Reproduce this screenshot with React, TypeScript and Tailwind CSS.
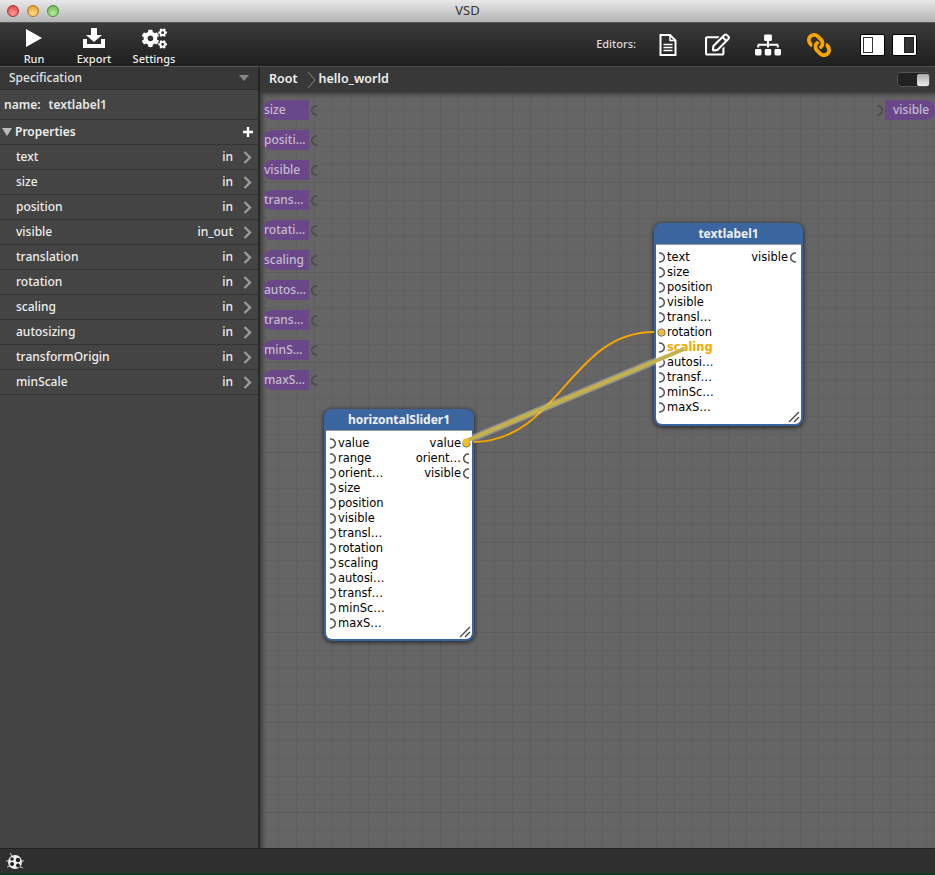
import React from "react";
import { FaCogs, FaRegEdit, FaSitemap, FaLink } from "react-icons/fa";

const FONT = "font-['Noto_Sans','DejaVu_Sans',sans-serif]";

const properties = [
  { name: "text", dir: "in" },
  { name: "size", dir: "in" },
  { name: "position", dir: "in" },
  { name: "visible", dir: "in_out" },
  { name: "translation", dir: "in" },
  { name: "rotation", dir: "in" },
  { name: "scaling", dir: "in" },
  { name: "autosizing", dir: "in" },
  { name: "transformOrigin", dir: "in" },
  { name: "minScale", dir: "in" },
];

const leftPills = ["size", "positi…", "visible", "trans…", "rotati…", "scaling", "autos…", "trans…", "minS…", "maxS…"];

// little half ring used for every connection port
const Port = ({ flip, color = "#555", filled }: { flip?: boolean; color?: string; filled?: boolean }) => (
  <svg width="7" height="11" viewBox="0 0 7 11" className={flip ? "shrink-0 -scale-x-100 overflow-visible" : "shrink-0 overflow-visible"}>
    {filled ? (
      <circle cx="3.5" cy="5.5" r="3.7" fill="#f0bd2c" stroke="#777" strokeWidth="1" />
    ) : (
      <path d="M1 1.2 A4.4 4.4 0 1 1 1 9.8" fill="none" stroke={color} strokeWidth="1.5" />
    )}
  </svg>
);

const NodeRow = ({ label, filled, highlight }: { label: string; filled?: boolean; highlight?: boolean }) => (
  <div className="flex h-[15px] items-center gap-[2px] leading-[15px]">
    <Port filled={filled} />
    <span className={highlight ? "font-bold text-[#f8a900]" : "text-black"}>{label}</span>
  </div>
);

const NodeOutRow = ({ label, filled }: { label: string; filled?: boolean }) => (
  <div className="flex h-[15px] items-center justify-end gap-[2px] leading-[15px]">
    <span className="text-black">{label}</span>
    <Port flip filled={filled} />
  </div>
);

const GraphNode = ({
  title,
  className,
  bodyPad,
  inputs,
  outputs,
  filledIn,
  highlight,
  filledOut,
}: {
  title: string;
  className: string;
  bodyPad: string;
  inputs: string[];
  outputs: string[];
  filledIn?: string;
  highlight?: string;
  filledOut?: string;
}) => (
  <div
    className={`absolute flex flex-col rounded-lg bg-[#3a659f] px-[2px] pb-[2px] shadow-[0_1px_5px_rgba(0,0,0,0.75)] ${className}`}
  >
    <div className="flex h-[21px] shrink-0 items-center justify-center text-[12px] font-bold text-[#eef2f8]">{title}</div>
    <div className={`relative flex flex-1 justify-between rounded-b-md border-t border-[#999] bg-white pt-[5px] font-['DejaVu_Sans',sans-serif] text-[11.5px] ${bodyPad}`}>
      <div className="flex flex-col">
        {inputs.map((n, i) => (
          <NodeRow key={i} label={n} filled={n === filledIn} highlight={n === highlight} />
        ))}
      </div>
      <div className="flex flex-col">
        {outputs.map((n, i) => (
          <NodeOutRow key={i} label={n} filled={n === filledOut} />
        ))}
      </div>
      <svg width="12" height="12" viewBox="0 0 12 12" className="absolute bottom-[1px] right-[1px]">
        <path d="M1 11 L11 1 M6 11 L11 6" stroke="#444" strokeWidth="1.3" />
      </svg>
    </div>
  </div>
);

const ToolButton = ({ label, icon, width }: { label: string; icon: React.ReactNode; width: string }) => (
  <div className={`flex flex-col items-center ${width}`}>
    <div className="flex h-[28px] items-center justify-center">{icon}</div>
    <span className="text-[11px] font-medium leading-[13px] text-[#eee]">{label}</span>
  </div>
);

export default function App() {
  return (
    <div className={`flex h-[875px] w-[935px] flex-col overflow-hidden bg-[#333] ${FONT}`}>
      {/* window title bar */}
      <div className="relative flex h-[23px] shrink-0 items-center justify-center border-b border-[#555] bg-gradient-to-b from-[#e9e9e9] to-[#b4b4b4] text-[13px] text-[#333]">
        <div className="absolute left-[7px] top-[5px] flex gap-[8px]">
          <div className="h-[12px] w-[12px] rounded-full border border-[#a33] bg-[radial-gradient(circle_at_50%_75%,#ff9d9d,#d6343a)]" />
          <div className="h-[12px] w-[12px] rounded-full border border-[#a97a1e] bg-[radial-gradient(circle_at_50%_75%,#ffdf8c,#dc9223)]" />
          <div className="h-[12px] w-[12px] rounded-full border border-[#4f8a3a] bg-[radial-gradient(circle_at_50%_75%,#b9f0a0,#5fae46)]" />
        </div>
        VSD
      </div>

      {/* toolbar */}
      <div className="flex h-[44px] shrink-0 items-center border-b border-[#555] bg-gradient-to-b from-[#3a3a3a] to-[#1f1f1f] pl-[10px] pr-[18px]">
        <ToolButton
          label="Run"
          width="w-[48px]"
          icon={
            <svg width="18" height="20" viewBox="0 0 18 20">
              <path d="M1 1 L17 10 L1 19 Z" fill="#fff" />
            </svg>
          }
        />
        <ToolButton
          label="Export"
          width="w-[60px] ml-[6px]"
          icon={
            <svg width="24" height="22" viewBox="0 0 24 22">
              <path d="M9 1 H15 V8 H20 L12 15 L4 8 H9 Z" fill="#fff" />
              <path d="M1 12 H5 V17 H19 V12 H23 V21 H1 Z" fill="#fff" />
            </svg>
          }
        />
        <ToolButton label="Settings" width="w-[60px]" icon={<FaCogs className="text-[25px] text-white" />} />
        <div className="ml-auto flex items-center">
          <span className="mr-[23px] text-[11px] font-medium text-[#ddd]">Editors:</span>
          <svg width="18" height="22" viewBox="0 0 18 22" className="mr-[28px]">
            <path d="M1.5 1 H11 L16.5 6.5 V21 H1.5 Z" fill="none" stroke="#fff" strokeWidth="2" />
            <path d="M11 1 V6.5 H16.5" fill="none" stroke="#fff" strokeWidth="1.5" />
            <path d="M4.5 10.5 H13.5 M4.5 13.5 H13.5 M4.5 16.5 H13.5" stroke="#fff" strokeWidth="1.5" />
          </svg>
          <FaRegEdit className="mr-[25px] text-[25px] text-white" />
          <FaSitemap className="mr-[26px] text-[26px] text-white" />
          <FaLink className="mr-[29px] -scale-x-100 text-[24px] text-[#f5a500]" />
          <div className="mr-[7px] flex h-[22px] w-[25px] items-center rounded-[2px] border border-black bg-white pl-[2px]">
            <div className="h-[16px] w-[10px] border border-[#333] bg-white" />
          </div>
          <div className="flex h-[22px] w-[25px] items-center justify-end rounded-[2px] border border-black bg-white pr-[2px]">
            <div className="h-[16px] w-[10px] border border-[#222] bg-[#333]" />
          </div>
        </div>
      </div>

      <div className="flex min-h-0 flex-1">
        {/* sidebar */}
        <div className="flex w-[260px] shrink-0 flex-col border-r-2 border-[#2a2a2a] bg-[#444] text-[12px] text-[#eee]">
          <div className="flex h-[23px] shrink-0 items-center justify-between border-b border-[#2d2d2d] bg-[#383838] pl-[9px] pr-[9px] font-medium text-[#e4e4e4]">
            Specification
            <svg width="10" height="6" viewBox="0 0 10 6">
              <path d="M0 0 H10 L5 6 Z" fill="#888" />
            </svg>
          </div>
          <div className="flex h-[30px] shrink-0 items-center gap-[8px] border-b border-[#333] pl-[4px] font-semibold text-[#e8e8e8]">
            <span>name:</span>
            <span>textlabel1</span>
          </div>
          <div className="flex h-[25px] shrink-0 items-center border-b border-[#333] pl-[2px] pr-[5px] font-semibold">
            <svg width="10" height="8" viewBox="0 0 10 8" className="mr-[3px]">
              <path d="M0 0 H10 L5 8 Z" fill="#bbb" />
            </svg>
            Properties
            <svg width="10" height="10" viewBox="0 0 10 10" className="ml-auto">
              <path d="M3.8 0 H6.2 V3.8 H10 V6.2 H6.2 V10 H3.8 V6.2 H0 V3.8 H3.8 Z" fill="#fff" />
            </svg>
          </div>
          {properties.map((p) => (
            <div key={p.name} className="flex h-[25px] shrink-0 items-center border-b border-[#333] pl-[16px] pr-[6px] font-medium">
              <span>{p.name}</span>
              <span className="ml-auto mr-[10px]">{p.dir}</span>
              <svg width="9" height="13" viewBox="0 0 9 13">
                <path d="M1.5 1 L7 6.5 L1.5 12" fill="none" stroke="#999" strokeWidth="2.4" />
              </svg>
            </div>
          ))}
        </div>

        {/* editor */}
        <div className="flex min-w-0 flex-1 flex-col">
          <div className="flex h-[25px] shrink-0 items-center bg-[#383838] pl-[9px] pr-[5px] text-[12.5px] font-semibold text-[#eee] shadow-[0_1px_3px_rgba(0,0,0,0.6)]">
            <span>Root</span>
            <svg width="9" height="18" viewBox="0 0 9 18" className="ml-[9px] mr-[3px]">
              <path d="M1 1 L8 9 L1 17" fill="none" stroke="#888" strokeWidth="1" />
            </svg>
            <span>hello_world</span>
            <div className="ml-auto flex h-[15px] w-[33px] items-center justify-end rounded-[4px] border border-[#555] bg-[#222]">
              <div className="h-[12px] w-[12px] rounded-[2px] bg-gradient-to-b from-[#aaa] to-[#eee]" />
            </div>
          </div>
          <div className="relative flex-1 overflow-hidden bg-[#656565] bg-[linear-gradient(#5d5d5d_1px,transparent_1px),linear-gradient(90deg,#5d5d5d_1px,transparent_1px),linear-gradient(#606060_1px,transparent_1px),linear-gradient(90deg,#606060_1px,transparent_1px)] bg-[size:90px_90px,90px_90px,18px_18px,18px_18px] text-[12px] shadow-[inset_3px_3px_4px_rgba(0,0,0,0.35)]">
            {/* pills on the left edge */}
            <div className="absolute left-[3px] top-[8px] flex flex-col gap-[10px]">
              {leftPills.map((p, i) => (
                <div key={i} className="flex h-[20px] items-center">
                  <div className="flex h-[20px] w-[46px] items-center overflow-hidden rounded-l-[9px] bg-[#6a4788] pl-[1px] font-medium text-[#c4bccd]">{p}</div>
                  <div className="ml-[2px]">
                    <Port flip color="#4a4a4a" />
                  </div>
                </div>
              ))}
            </div>
            <div className="absolute right-0 top-[8px] flex h-[20px] items-center">
              <Port color="#4a4a4a" />
              <div className="ml-[2px] flex h-[20px] w-[50px] items-center rounded-r-[9px] bg-[#6a4788] pl-[8px] font-medium text-[#c4bccd]">visible</div>
            </div>

            <GraphNode
              title="textlabel1"
              className="left-[394px] top-[131px] h-[203px] w-[149px]"
              bodyPad="pl-[2px] pr-[4px]"
              inputs={["text", "size", "position", "visible", "transl…", "rotation", "scaling", "autosi…", "transf…", "minSc…", "maxS…"]}
              outputs={["visible"]}
              filledIn="rotation"
              highlight="scaling"
            />
            <GraphNode
              title="horizontalSlider1"
              className="left-[64px] top-[317px] h-[232px] w-[150px]"
              bodyPad="pl-[3px] pr-[2px]"
              inputs={["value", "range", "orient…", "size", "position", "visible", "transl…", "rotation", "scaling", "autosi…", "transf…", "minSc…", "maxS…"]}
              outputs={["value", "orient…", "visible"]}
              filledOut="value"
            />

            {/* connections */}
            <svg width="675" height="756" viewBox="260 92 675 756" className="pointer-events-none absolute left-0 top-0">
              <path d="M474 442 C 560 440, 570 332, 654 332" fill="none" stroke="#f5a500" strokeWidth="2" />
              <path d="M466 441 L684 349" stroke="#ffffff" strokeOpacity="0.3" strokeWidth="7" />
              <path d="M466 441 L684 349" stroke="#c4b248" strokeWidth="4" />
              <circle cx="466" cy="442" r="3.5" fill="#f0bd2c" />
            </svg>
          </div>
        </div>
      </div>

      {/* status bar */}
      <div className="flex h-[25px] shrink-0 items-center border-t border-[#222] bg-[#2f2f2f] pl-[6px]">
        <svg width="18" height="20" viewBox="0 0 18 20">
          <circle cx="9" cy="11" r="7" fill="#eee" />
          <circle cx="6" cy="8" r="1.8" fill="#222" />
          <circle cx="12" cy="9" r="2.2" fill="#222" />
          <circle cx="6" cy="13" r="2" fill="#222" />
          <circle cx="12" cy="14.5" r="2" fill="#222" />
          <path d="M4 2 L6 5 M0 10 H3 M15 10 H18 M1 16 L4 15 M14 16 L17 17" stroke="#ccc" strokeWidth="1" />
        </svg>
      </div>
      <div className="h-[2px] shrink-0 bg-[#0d3a22]" />
    </div>
  );
}
